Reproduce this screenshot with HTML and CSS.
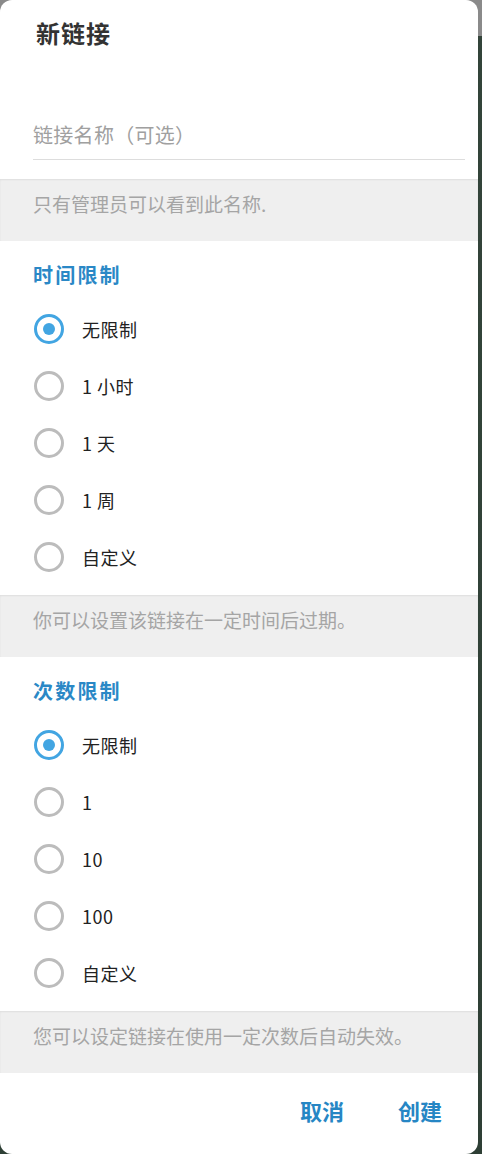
FILE: index.html
```html
<!DOCTYPE html>
<html lang="zh-CN">
<head>
<meta charset="utf-8">
<title>新链接</title>
<link rel="stylesheet" href="styles.css">
</head>
<body>
<div class="dialog">
  <h1 class="title">新链接</h1>
  <div class="field"><span class="placeholder">链接名称（可选）</span></div>
  <div class="note">只有管理员可以看到此名称.</div>

  <section class="group">
    <h2 class="group-title">时间限制</h2>
    <ul class="options">
      <li class="option"><span class="radio checked"></span><span class="label">无限制</span></li>
      <li class="option"><span class="radio"></span><span class="label">1 小时</span></li>
      <li class="option"><span class="radio"></span><span class="label">1 天</span></li>
      <li class="option"><span class="radio"></span><span class="label">1 周</span></li>
      <li class="option"><span class="radio"></span><span class="label">自定义</span></li>
    </ul>
  </section>
  <div class="note">你可以设置该链接在一定时间后过期。</div>

  <section class="group">
    <h2 class="group-title">次数限制</h2>
    <ul class="options">
      <li class="option"><span class="radio checked"></span><span class="label">无限制</span></li>
      <li class="option"><span class="radio"></span><span class="label">1</span></li>
      <li class="option"><span class="radio"></span><span class="label">10</span></li>
      <li class="option"><span class="radio"></span><span class="label">100</span></li>
      <li class="option"><span class="radio"></span><span class="label">自定义</span></li>
    </ul>
  </section>
  <div class="note">您可以设定链接在使用一定次数后自动失效。</div>

  <div class="actions">
    <button class="btn">取消</button>
    <button class="btn">创建</button>
  </div>
</div>
</body>
</html>
```

FILE: styles.css
```css
* { box-sizing: border-box; }
html, body { margin: 0; padding: 0; }
body {
  width: 482px;
  height: 1154px;
  overflow: hidden;
  background: linear-gradient(to bottom, #8a8a8a 0, #8a8a8a 36px, #33443a 36px, #2e3f35 100%);
  font-family: "Noto Sans CJK SC", "Noto Sans", sans-serif;
}
.dialog {
  width: 478px;
  height: 1154px;
  background: #ffffff;
  border-radius: 12px;
  overflow: hidden;
  display: flex;
  flex-direction: column;
}
.title {
  margin: 0;
  padding: 16px 0 0 36px;
  font-size: 24px;
  line-height: 34px;
  font-weight: 700;
  color: #333333;
  letter-spacing: 1px;
}
.field {
  margin: 71px 13px 0 33px;
  padding-bottom: 10px;
  border-bottom: 1px solid #dddddd;
}
.placeholder {
  display: block;
  font-size: 20px;
  line-height: 28px;
  color: #a0a0a0;
  letter-spacing: 0.3px;
}
.note {
  height: 62px;
  padding: 12px 0 0 33px;
  background: #efefef;
  box-shadow: inset 0 1px 2px rgba(0, 0, 0, 0.07);
  font-size: 19px;
  line-height: 26px;
  color: #a5a5a5;
}
.field + .note { margin-top: 19px; }
.group {
  padding: 20px 0 10px 0;
}
.group-title {
  margin: 0 0 11px 33px;
  font-size: 20px;
  line-height: 28px;
  font-weight: 700;
  color: #2a88c6;
  letter-spacing: 2.2px;
}
.options {
  list-style: none;
  margin: 0;
  padding: 0;
}
.option {
  height: 57px;
  display: flex;
  align-items: center;
  padding-left: 34px;
  gap: 18px;
}
.radio {
  width: 30px;
  height: 30px;
  border-radius: 50%;
  border: 3px solid #bcbcbc;
  display: flex;
  align-items: center;
  justify-content: center;
  flex: none;
}
.radio.checked {
  border-color: #42a5e2;
}
.radio.checked::after {
  content: "";
  width: 12px;
  height: 12px;
  border-radius: 50%;
  background: #42a5e2;
}
.label {
  font-size: 18px;
  line-height: 24px;
  color: #222222;
  letter-spacing: 0.5px;
}
.actions {
  display: flex;
  justify-content: flex-end;
  gap: 54px;
  padding: 22px 36px 0 0;
}
.btn {
  border: 0;
  background: none;
  padding: 0;
  font-family: inherit;
  font-size: 22px;
  line-height: 30px;
  font-weight: 700;
  color: #2686c4;
  cursor: pointer;
}
```
